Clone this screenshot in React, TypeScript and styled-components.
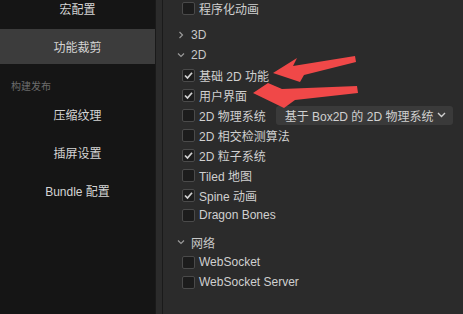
import styled, { createGlobalStyle } from 'styled-components'

const GlobalStyle = createGlobalStyle`
  html, body {
    margin: 0;
    padding: 0;
    background: #2b2b2b;
  }
  body {
    font-family: "Liberation Sans", "Noto Sans CJK SC", sans-serif;
    font-size: 12px;
    color: #cccccc;
  }
`

const Window = styled.div`
  position: relative;
  display: flex;
  width: 463px;
  height: 314px;
  overflow: hidden;
`

const Sidebar = styled.nav`
  width: 155px;
  flex-shrink: 0;
  background: #151515;
  display: flex;
  flex-direction: column;
  overflow: hidden;
`

const NavList = styled.div`
  display: flex;
  flex-direction: column;
  margin-top: -9px;
`

const NavItem = styled.div<{ active?: boolean }>`
  height: 35px;
  margin-bottom: 3px;
  display: flex;
  align-items: center;
  justify-content: center;
  font-size: 12px;
  color: #d4d4d4;
  background: ${props => (props.active ? '#3c3c3c' : 'transparent')};
`

const SectionLabel = styled.div`
  height: 30px;
  box-sizing: border-box;
  padding: 14px 0 0 11px;
  font-size: 10px;
  line-height: 12px;
  color: #6c6c6c;
`

const Splitter = styled.div`
  width: 6px;
  flex-shrink: 0;
  background: #2b2b2b;
  border-left: 1px solid #1a1a1a;
  border-right: 1px solid #1a1a1a;
`

const Content = styled.div`
  flex: 1;
  display: flex;
  flex-direction: column;
  margin-top: -2px;
`

const Group = styled.div`
  display: flex;
  flex-direction: column;
`

const GroupItems = styled.div`
  display: flex;
  flex-direction: column;
  padding-bottom: 7px;
`

const GroupHeader = styled.div`
  height: 20px;
  display: flex;
  align-items: center;
  padding-left: 13px;
  color: #c8c8c8;
`

const Chevron = styled.span`
  width: 10px;
  margin-right: 5px;
  display: flex;
  align-items: center;
  justify-content: center;
`

const Row = styled.div`
  height: 20px;
  display: flex;
  align-items: center;
  padding-left: 19px;
`

const Box = styled.span`
  width: 13px;
  height: 13px;
  box-sizing: border-box;
  border: 1px solid #4a4a4a;
  border-radius: 2px;
  background: #1c1c1c;
  display: flex;
  align-items: center;
  justify-content: center;
  flex-shrink: 0;
`

const Label = styled.span`
  margin-left: 4px;
  white-space: nowrap;
  color: #d0d0d0;
`

const Select = styled.div`
  margin-left: 10px;
  width: 177px;
  height: 19px;
  box-sizing: border-box;
  padding: 0 7px 0 9px;
  border-radius: 3px;
  background: #3a3a3a;
  display: flex;
  align-items: center;
  justify-content: space-between;
  white-space: nowrap;
  color: #d0d0d0;
`

const Overlay = styled.svg`
  position: absolute;
  left: 0;
  top: 0;
  pointer-events: none;
`

function Check({ on }: { on: boolean }) {
  return (
    <Box>
      {on && (
        <svg width="11" height="11" viewBox="0 0 11 11">
          <polyline points="2,5.5 4.5,8 9,2.8" fill="none" stroke="#d2d2d2" strokeWidth="1.7" />
        </svg>
      )}
    </Box>
  )
}

function Caret({ open }: { open: boolean }) {
  return (
    <Chevron>
      {open ? (
        <svg width="8" height="6" viewBox="0 0 8 6">
          <polyline points="1,1.5 4,4.5 7,1.5" fill="none" stroke="#9a9a9a" strokeWidth="1.2" />
        </svg>
      ) : (
        <svg width="6" height="8" viewBox="0 0 6 8">
          <polyline points="1.5,1 4.5,4 1.5,7" fill="none" stroke="#9a9a9a" strokeWidth="1.2" />
        </svg>
      )}
    </Chevron>
  )
}

const items2d = [
  { name: '基础 2D 功能', on: true },
  { name: '用户界面', on: true },
  { name: '2D 物理系统', on: false, select: '基于 Box2D 的 2D 物理系统' },
  { name: '2D 相交检测算法', on: false },
  { name: '2D 粒子系统', on: true },
  { name: 'Tiled 地图', on: false },
  { name: 'Spine 动画', on: true },
  { name: 'Dragon Bones', on: false },
]

const itemsNet = [
  { name: 'WebSocket', on: false },
  { name: 'WebSocket Server', on: false },
]

export default function App() {
  return (
    <Window>
      <GlobalStyle />
      <Sidebar>
        <NavList>
          <NavItem>宏配置</NavItem>
          <NavItem active>功能裁剪</NavItem>
          <SectionLabel>构建发布</SectionLabel>
          <NavItem>压缩纹理</NavItem>
          <NavItem>插屏设置</NavItem>
          <NavItem>Bundle 配置</NavItem>
        </NavList>
      </Sidebar>
      <Splitter />
      <Content>
        <Group>
          <GroupItems>
            <Row>
              <Check on={false} />
              <Label>程序化动画</Label>
            </Row>
          </GroupItems>
        </Group>
        <Group>
          <GroupHeader>
            <Caret open={false} />
            3D
          </GroupHeader>
        </Group>
        <Group>
          <GroupHeader>
            <Caret open />
            2D
          </GroupHeader>
          <GroupItems>
            {items2d.map(item => (
              <Row key={item.name}>
                <Check on={item.on} />
                <Label>{item.name}</Label>
                {item.select && (
                  <Select>
                    {item.select}
                    <svg width="9" height="6" viewBox="0 0 9 6">
                      <polyline points="1,1 4.5,4.5 8,1" fill="none" stroke="#cfcfcf" strokeWidth="1.4" />
                    </svg>
                  </Select>
                )}
              </Row>
            ))}
          </GroupItems>
        </Group>
        <Group>
          <GroupHeader>
            <Caret open />
            网络
          </GroupHeader>
          <GroupItems>
            {itemsNet.map(item => (
              <Row key={item.name}>
                <Check on={item.on} />
                <Label>{item.name}</Label>
              </Row>
            ))}
          </GroupItems>
        </Group>
      </Content>
      {/* annotation arrows drawn on top of the screenshot */}
      <Overlay width="463" height="314" viewBox="0 0 463 314">
        <polygon points="273,73 297,58 293,66 355,56 356,62 304,75 300,82" fill="#f04848" />
        <polygon points="253,93 268,83 282,89 357,86 358,93 295,100 284,108" fill="#f04848" />
      </Overlay>
    </Window>
  )
}
